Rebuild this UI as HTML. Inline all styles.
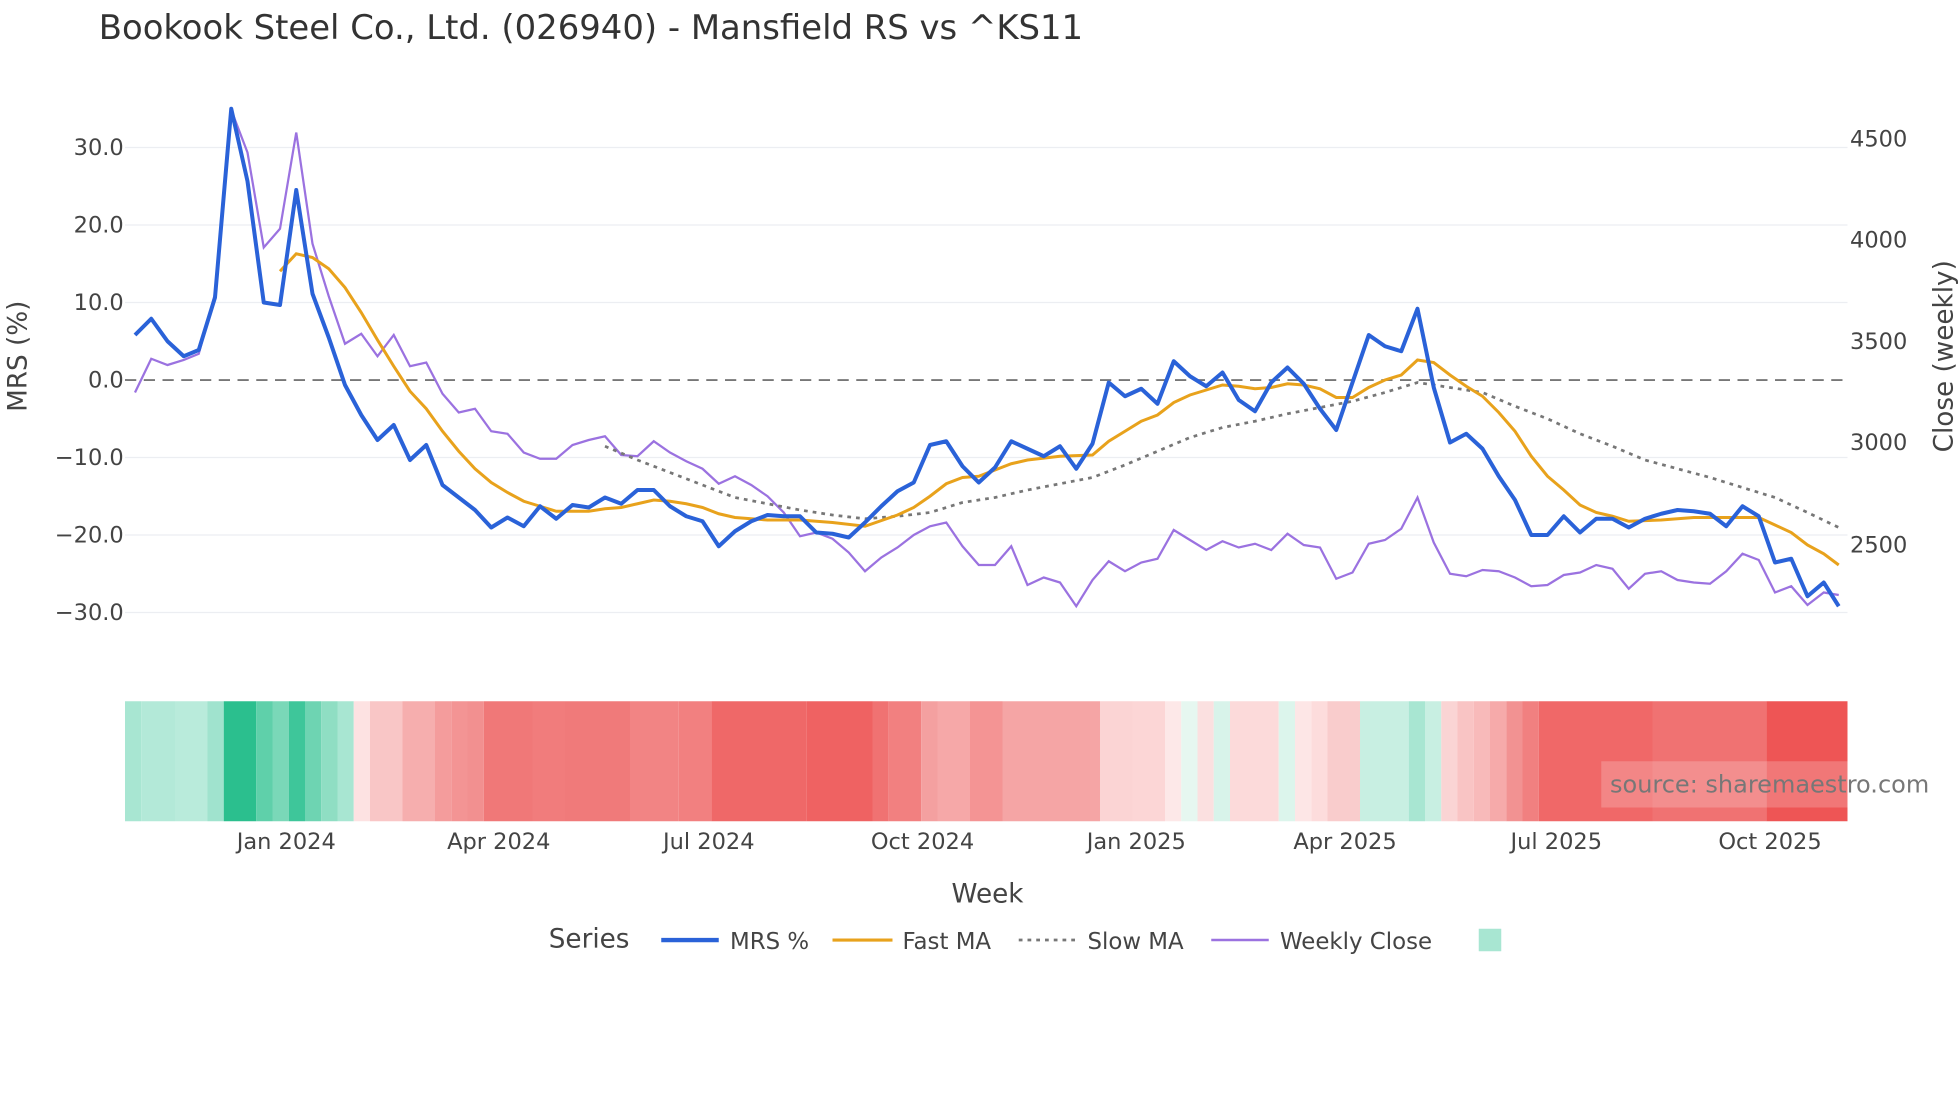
<!DOCTYPE html>
<html><head><meta charset="utf-8"><style>
html,body{margin:0;padding:0;background:#fff;}
svg{display:block;font-family:"DejaVu Sans","Liberation Sans",sans-serif;}
</style></head><body>
<svg width="1960" height="1102" viewBox="0 0 1568 881.6" xmlns="http://www.w3.org/2000/svg">
<rect width="1568" height="882" fill="#fff"/>
<text x="79" y="31" font-size="27.1" fill="#333">Bookook Steel Co., Ltd. (026940) - Mansfield RS vs ^KS11</text>
<g stroke="#eceef2" stroke-width="1">
<line x1="100" x2="1478" y1="118" y2="118"/><line x1="100" x2="1478" y1="180" y2="180"/><line x1="100" x2="1478" y1="242" y2="242"/><line x1="100" x2="1478" y1="366" y2="366"/><line x1="100" x2="1478" y1="428" y2="428"/><line x1="100" x2="1478" y1="490" y2="490"/>
</g>
<line x1="100" x2="1478" y1="304" y2="304" stroke="#777" stroke-width="1.5" stroke-dasharray="9,6"/>
<g font-size="18" fill="#444" text-anchor="end">
<text x="99" y="124">30.0</text><text x="99" y="186">20.0</text><text x="99" y="248">10.0</text><text x="99" y="310">0.0</text><text x="99" y="372">−10.0</text><text x="99" y="434">−20.0</text><text x="99" y="496">−30.0</text>
</g>
<g font-size="18" fill="#444">
<text x="1480" y="117">4500</text><text x="1480" y="198">4000</text><text x="1480" y="279">3500</text><text x="1480" y="360">3000</text><text x="1480" y="442">2500</text>
</g>
<text transform="translate(21,285) rotate(-90)" font-size="21" fill="#444" text-anchor="middle">MRS (%)</text>
<text transform="translate(1562,285) rotate(-90)" font-size="21" fill="#444" text-anchor="middle">Close (weekly)</text>
<polyline fill="none" stroke="#9b72e0" stroke-width="1.8" points="108,314 121,287 134,292 147,288 159,283 172,235 185,88 198,122 211,198 224,183 237,106 250,195 263,237 276,275 289,267 302,285 315,268 328,293 341,290 354,315 367,330 380,327 393,345 406,347 419,362 432,367 445,367 458,356 471,352 484,349 497,364 510,365 523,353 536,362 549,369 562,375 575,387 588,381 601,388 614,397 627,410 640,429 653,426 666,431 679,442 692,457 705,446 718,438 731,428 744,421 757,418 770,437 783,452 796,452 809,437 822,468 835,462 848,466 861,485 874,464 887,449 900,457 913,450 926,447 939,424 952,432 965,440 978,433 991,438 1004,435 1017,440 1030,427 1043,436 1056,438 1069,463 1082,458 1095,435 1108,432 1121,423 1134,398 1147,434 1160,459 1173,461 1186,456 1199,457 1212,462 1225,469 1238,468 1251,460 1264,458 1277,452 1290,455 1303,471 1316,459 1329,457 1342,464 1355,466 1368,467 1381,457 1394,443 1407,448 1420,474 1433,469 1446,484 1459,474 1471,476"/>
<polyline fill="none" stroke="#777" stroke-width="2.2" stroke-dasharray="3,4" points="484,357 510,368 536,378 562,388 588,398 614,403 640,408 666,412 692,415 718,413 744,410 770,402 796,398 822,392 848,387 874,382 900,372 926,361 952,350 978,342 1004,337 1030,331 1056,326 1082,321 1108,314 1134,306 1160,310 1186,314 1212,325 1238,335 1264,347 1290,357 1316,368 1342,375 1368,382 1394,390 1420,398 1446,410 1471,422"/>
<polyline fill="none" stroke="#e8a21c" stroke-width="2.4" points="224,217 237,203 250,206 263,215 276,230 289,250 302,272 315,293 328,313 341,327 354,345 367,361 380,375 393,386 406,394 419,401 432,405 445,409 458,409 471,409 484,407 497,406 510,403 523,400 536,401 549,403 562,406 575,411 588,414 601,415 614,416 640,416 666,418 692,421 718,412 731,406 744,397 757,387 770,382 783,381 796,376 809,371 822,368 848,365 874,364 887,353 900,345 913,337 926,332 939,322 952,316 965,312 978,308 991,309 1004,311 1017,310 1030,307 1043,308 1056,311 1069,318 1082,318 1095,310 1108,304 1121,300 1134,288 1147,290 1160,300 1173,309 1186,317 1199,330 1212,345 1225,365 1238,381 1251,392 1264,404 1277,410 1290,413 1303,417 1329,416 1355,414 1381,414 1407,414 1420,420 1433,426 1446,436 1459,443 1471,452"/>
<polyline fill="none" stroke="#2a62d8" stroke-width="3.2" stroke-linejoin="round" points="108,268 121,255 134,273 147,285 159,280 172,238 185,87 198,145 211,242 224,244 237,152 250,235 263,270 276,308 289,332 302,352 315,340 328,368 341,356 354,388 367,398 380,408 393,422 406,414 419,421 432,405 445,415 458,404 471,406 484,398 497,403 510,392 523,392 536,405 549,413 562,417 575,437 588,425 601,417 614,412 627,413 640,413 653,426 666,427 679,430 692,418 705,405 718,393 731,386 744,356 757,353 770,373 783,386 796,374 809,353 822,359 835,365 848,357 861,375 874,355 887,306 900,317 913,311 926,323 939,289 952,301 965,309 978,298 991,320 1004,329 1017,306 1030,294 1043,307 1056,327 1069,344 1082,306 1095,268 1108,277 1121,281 1134,247 1147,310 1160,354 1173,347 1186,359 1199,381 1212,400 1225,428 1238,428 1251,413 1264,426 1277,415 1290,415 1303,422 1316,415 1329,411 1342,408 1355,409 1368,411 1381,421 1394,405 1407,413 1420,450 1433,447 1446,477 1459,466 1471,485"/>
<g>
<rect x="100" y="561" width="13" height="96" fill="#a8e6d2"/><rect x="113" y="561" width="27" height="96" fill="#b3e9d8"/><rect x="140" y="561" width="26" height="96" fill="#b9ebdb"/><rect x="166" y="561" width="13" height="96" fill="#a0e3ce"/><rect x="179" y="561" width="26" height="96" fill="#2bbf8e"/><rect x="205" y="561" width="13" height="96" fill="#5fd0aa"/><rect x="218" y="561" width="13" height="96" fill="#7ad8b8"/><rect x="231" y="561" width="13" height="96" fill="#3ec69a"/><rect x="244" y="561" width="13" height="96" fill="#6ed4b2"/><rect x="257" y="561" width="13" height="96" fill="#8fdec3"/><rect x="270" y="561" width="13" height="96" fill="#a8e6d2"/><rect x="283" y="561" width="13" height="96" fill="#fde2e2"/><rect x="296" y="561" width="26" height="96" fill="#f9c6c6"/><rect x="322" y="561" width="26" height="96" fill="#f6aeae"/><rect x="348" y="561" width="13" height="96" fill="#f49c9c"/><rect x="361" y="561" width="13" height="96" fill="#f39494"/><rect x="374" y="561" width="13" height="96" fill="#f29090"/><rect x="387" y="561" width="39" height="96" fill="#f07878"/><rect x="426" y="561" width="26" height="96" fill="#f17c7c"/><rect x="452" y="561" width="52" height="96" fill="#f07a7a"/><rect x="504" y="561" width="39" height="96" fill="#f28484"/><rect x="543" y="561" width="26" height="96" fill="#f28080"/><rect x="569" y="561" width="76" height="96" fill="#ef6868"/><rect x="645" y="561" width="53" height="96" fill="#ef6262"/><rect x="698" y="561" width="13" height="96" fill="#f07272"/><rect x="711" y="561" width="26" height="96" fill="#f28080"/><rect x="737" y="561" width="13" height="96" fill="#f4a0a0"/><rect x="750" y="561" width="26" height="96" fill="#f6a8a8"/><rect x="776" y="561" width="26" height="96" fill="#f49494"/><rect x="802" y="561" width="78" height="96" fill="#f5a5a5"/><rect x="880" y="561" width="26" height="96" fill="#fbd4d4"/><rect x="906" y="561" width="26" height="96" fill="#fcd6d6"/><rect x="932" y="561" width="13" height="96" fill="#fde8e8"/><rect x="945" y="561" width="13" height="96" fill="#e6f7f0"/><rect x="958" y="561" width="13" height="96" fill="#fbe0e0"/><rect x="971" y="561" width="13" height="96" fill="#d8f3ea"/><rect x="984" y="561" width="39" height="96" fill="#fcdada"/><rect x="1023" y="561" width="13" height="96" fill="#dcf5ec"/><rect x="1036" y="561" width="13" height="96" fill="#fde6e6"/><rect x="1049" y="561" width="13" height="96" fill="#fddcdc"/><rect x="1062" y="561" width="26" height="96" fill="#f9cccc"/><rect x="1088" y="561" width="39" height="96" fill="#c8efe2"/><rect x="1127" y="561" width="13" height="96" fill="#a8e6d2"/><rect x="1140" y="561" width="13" height="96" fill="#c8efe2"/><rect x="1153" y="561" width="13" height="96" fill="#fad4d4"/><rect x="1166" y="561" width="13" height="96" fill="#f9c4c4"/><rect x="1179" y="561" width="13" height="96" fill="#f8baba"/><rect x="1192" y="561" width="13" height="96" fill="#f6aaaa"/><rect x="1205" y="561" width="13" height="96" fill="#f29292"/><rect x="1218" y="561" width="13" height="96" fill="#f18080"/><rect x="1231" y="561" width="91" height="96" fill="#f06868"/><rect x="1322" y="561" width="91" height="96" fill="#f07272"/><rect x="1413" y="561" width="65" height="96" fill="#ee5555"/>
</g>
<rect x="1281" y="609" width="197" height="37" fill="#fff" fill-opacity="0.2"/>
<text x="1288" y="634" font-size="19.2" fill="#777">source: sharemaestro.com</text>
<g font-size="18" fill="#444" text-anchor="middle">
<text x="229" y="679">Jan 2024</text><text x="399" y="679">Apr 2024</text><text x="567" y="679">Jul 2024</text><text x="738" y="679">Oct 2024</text><text x="909" y="679">Jan 2025</text><text x="1076" y="679">Apr 2025</text><text x="1245" y="679">Jul 2025</text><text x="1416" y="679">Oct 2025</text>
</g>
<text x="790" y="722" font-size="21" fill="#444" text-anchor="middle">Week</text>
<text x="439" y="758" font-size="21" fill="#444">Series</text>
<line x1="529" x2="575" y1="752" y2="752" stroke="#2a62d8" stroke-width="3.5"/>
<text x="584" y="759" font-size="18.3" fill="#444">MRS %</text>
<line x1="666" x2="714" y1="752" y2="752" stroke="#e8a21c" stroke-width="2.5"/>
<text x="722" y="759" font-size="18.3" fill="#444">Fast MA</text>
<line x1="815" x2="860" y1="752" y2="752" stroke="#777" stroke-width="2.2" stroke-dasharray="3,4"/>
<text x="870" y="759" font-size="18.3" fill="#444">Slow MA</text>
<line x1="969" x2="1015" y1="752" y2="752" stroke="#9b72e0" stroke-width="2"/>
<text x="1024" y="759" font-size="18.3" fill="#444">Weekly Close</text>
<rect x="1183" y="743" width="18" height="18" fill="#a8e6d2"/>
</svg>
</body></html>
